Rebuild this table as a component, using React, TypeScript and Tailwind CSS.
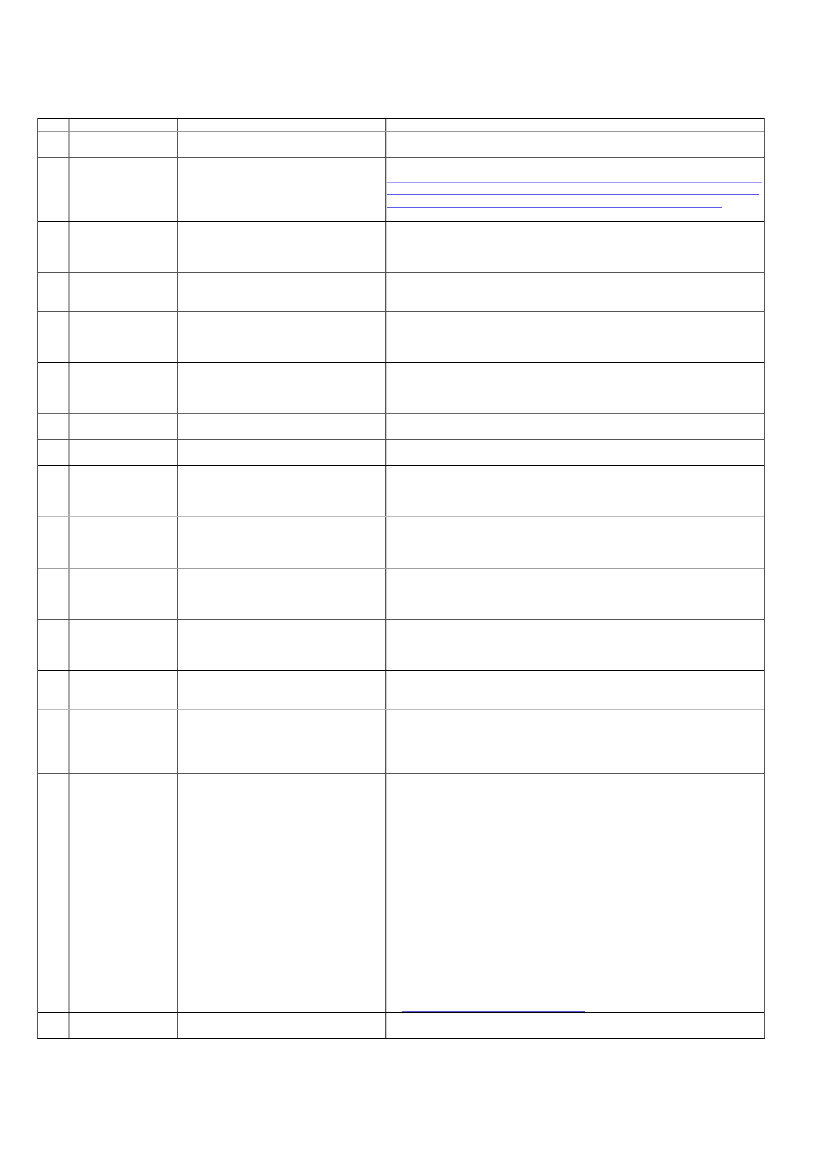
import React from "react";

type Row = { h: number; top: string; content?: React.ReactNode };

const rows: Row[] = [
  { h: 13, top: "border-t border-black" },
  { h: 26, top: "border-t border-[#999]" },
  {
    h: 64,
    top: "border-t border-[#555]",
    content: (
      <div className="flex flex-col pt-[24px] pl-[1px]">
        <div className="h-px w-[375px] bg-[#a0a0f6]" />
        <div className="mt-[11px] h-px w-[372px] bg-[#5a5aeb]" />
        <div className="mt-[12px] h-px w-[335px] bg-[#5a5aeb]" />
      </div>
    ),
  },
  { h: 51, top: "border-t border-black" },
  { h: 39, top: "border-t border-[#555]" },
  { h: 51, top: "border-t border-[#555]" },
  { h: 51, top: "border-t border-black" },
  { h: 26, top: "border-t border-[#666]" },
  { h: 26, top: "border-t border-[#555]" },
  { h: 51, top: "border-t border-black" },
  { h: 52, top: "border-t border-[#bbb]" },
  { h: 51, top: "border-t border-[#a0a0a0]" },
  { h: 51, top: "border-t border-[#555]" },
  { h: 39, top: "border-t border-black" },
  { h: 64, top: "border-t border-[#bbb]" },
  {
    h: 239,
    top: "border-t border-[#555]",
    content: (
      <div className="flex h-full flex-col justify-end pl-[16px]">
        <div className="h-px w-[183px] bg-[#5a5ae0]" />
      </div>
    ),
  },
  { h: 26, top: "border-t border-black" },
];

export default function App() {
  return (
    <div className="min-h-[1169px] w-[827px] bg-white pt-[118px] pl-[37px]" style={{ fontFamily: '"Liberation Sans", Arial, sans-serif' }}>
      <div className="flex w-[728px] flex-col border-l border-r border-b border-l-[#555] border-r-[#555] border-b-black">
        {rows.map((r, i) => (
          <div key={i} className={`flex box-border ${r.top}`} style={{ height: r.h }}>
            <div className="w-[32px] shrink-0 border-r-2 border-[#aaa]" />
            <div className="w-[108px] shrink-0 border-r border-[#555]" />
            <div className="w-[208px] shrink-0 border-r border-[#555] shadow-[1px_0_0_#ccc]" />
            <div className="flex-1">{r.content}</div>
          </div>
        ))}
      </div>
    </div>
  );
}
